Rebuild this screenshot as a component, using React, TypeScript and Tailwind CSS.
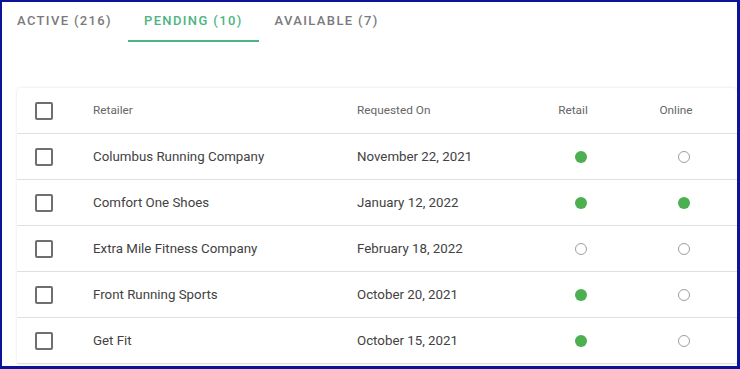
type Row = {
  retailer: string
  requested: string
  retail: boolean
  online: boolean
}

const rows: Row[] = [
  { retailer: 'Columbus Running Company', requested: 'November 22, 2021', retail: true, online: false },
  { retailer: 'Comfort One Shoes', requested: 'January 12, 2022', retail: true, online: true },
  { retailer: 'Extra Mile Fitness Company', requested: 'February 18, 2022', retail: false, online: false },
  { retailer: 'Front Running Sports', requested: 'October 20, 2021', retail: true, online: false },
  { retailer: 'Get Fit', requested: 'October 15, 2021', retail: true, online: false },
]

const tabs = [
  { label: 'Active (216)', active: false },
  { label: 'Pending (10)', active: true },
  { label: 'Available (7)', active: false },
]

const grid = 'grid grid-cols-[76px_264px_173px_102px_104px]'

function Checkbox() {
  return <span className="block h-[18px] w-[18px] rounded-[2px] border-2 border-[#6f6f6f]" />
}

function Dot({ on }: { on: boolean }) {
  return on ? (
    <span className="block h-3 w-3 rounded-full bg-[#4caf50]" />
  ) : (
    <span className="block h-3 w-3 rounded-full border border-[#9e9e9e]" />
  )
}

export default function App() {
  return (
    <div
      className="h-[369px] w-[740px] overflow-hidden border-t-2 border-r-[3px] border-b-[3px] border-l-2 border-[#0c1398] bg-white"
      style={{ fontFamily: 'Roboto, "Liberation Sans", sans-serif' }}
    >
      <div className="-ml-px flex h-10">
        {tabs.map((tab) => (
          <div
            key={tab.label}
            className={`flex h-10 items-center border-b-2 px-4 text-[13px] font-medium uppercase tracking-[0.105em] ${
              tab.active ? 'border-[#4cb57f] text-[#4cb57f]' : 'border-transparent text-[#7a7a7a]'
            }`}
          >
            {tab.label}
          </div>
        ))}
      </div>

      <div className="ml-[15px] mt-[46px] w-[720px] rounded-[4px] bg-white shadow-[0_0_3px_rgba(0,0,0,0.12)]">
        <div className={`${grid} h-[46px] items-center border-b border-[#e0e0e0] text-[11.8px] text-[#666]`}>
          <div className="pl-[18px]">
            <Checkbox />
          </div>
          <div>Retailer</div>
          <div>Requested On</div>
          <div className="pr-4 text-center">Retail</div>
          <div className="pr-4 text-center">Online</div>
        </div>
        {rows.map((row) => (
          <div
            key={row.retailer}
            className={`${grid} h-[46px] items-center border-b border-[#e0e0e0] pt-px text-[13.3px] text-[#424242]`}
          >
            <div className="pl-[18px]">
              <Checkbox />
            </div>
            <div>{row.retailer}</div>
            <div>{row.requested}</div>
            <div className="flex justify-center">
              <Dot on={row.retail} />
            </div>
            <div className="flex justify-center">
              <Dot on={row.online} />
            </div>
          </div>
        ))}
      </div>
    </div>
  )
}
